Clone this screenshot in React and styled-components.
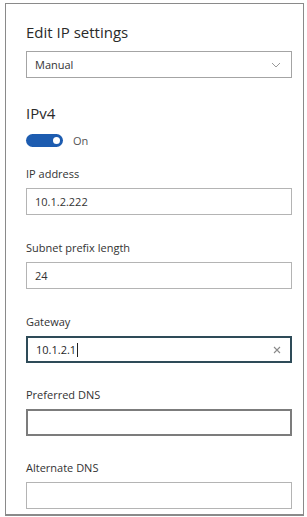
import React from "react";
import styled, { createGlobalStyle } from "styled-components";

const GlobalStyle = createGlobalStyle`
  body {
    margin: 0;
    background: #ffffff;
    font-family: "Open Sans", "Noto Sans", "Liberation Sans", sans-serif;
  }
`;

const Page = styled.div`
  width: 307px;
  height: 517px;
  padding: 3px 3px 0 5px;
  box-sizing: border-box;
  background: #ffffff;
`;

const Panel = styled.div`
  width: 299px;
  height: 513px;
  box-sizing: border-box;
  border: 1px solid #8a8a8a;
  border-bottom-width: 2px;
  padding: 18px 11px 0 20px;
  overflow: hidden;
`;

const Title = styled.div`
  font-size: 15px;
  line-height: 20px;
  color: #2a2a2a;
`;

const Select = styled.div`
  margin-top: 9px;
  height: 27px;
  box-sizing: border-box;
  border: 1.5px solid #a4a4a4;
  display: flex;
  align-items: center;
  justify-content: space-between;
  padding: 0 10px 0 8px;
  font-size: 11px;
  color: #333;
`;

const Heading = styled.div`
  margin-top: 25px;
  font-size: 15px;
  line-height: 20px;
  color: #2a2a2a;
`;

const ToggleRow = styled.div`
  margin-top: 9px;
  height: 16px;
  display: flex;
  align-items: center;
  gap: 10px;
  font-size: 11px;
  color: #555;
`;

const Switch = styled.div`
  width: 37px;
  height: 13px;
  border-radius: 7px;
  background: #1d5cb0;
  display: flex;
  align-items: center;
  justify-content: flex-end;
  padding-right: 3px;
  box-sizing: border-box;
`;

const Knob = styled.div`
  width: 7px;
  height: 7px;
  border-radius: 50%;
  background: #ffffff;
`;

const Field = styled.div`
  margin-top: ${({ $gap }) => $gap}px;
`;

const Label = styled.div`
  font-size: 11px;
  line-height: 16px;
  color: #333;
  margin-bottom: 6px;
`;

const Input = styled.div`
  height: 27px;
  box-sizing: border-box;
  border: ${({ $variant }) =>
    $variant === "focus"
      ? "2px solid #2e4b58"
      : $variant === "dark"
      ? "2px solid #7c7c7c"
      : "1.5px solid #b4b4b4"};
  display: flex;
  align-items: center;
  justify-content: space-between;
  padding: 0 9px 0 8px;
  font-size: 11px;
  color: ${({ $variant }) => ($variant === "focus" ? "#1f1f1f" : "#333")};
`;

const Value = styled.span`
  display: flex;
  align-items: center;
`;

const Caret = styled.span`
  display: inline-block;
  width: 1px;
  height: 14px;
  background: #222;
  margin-left: 1px;
`;

const Chevron = () => (
  <svg width="10" height="6" viewBox="0 0 10 6">
    <path d="M1 1l4 4 4-4" fill="none" stroke="#9a9a9a" strokeWidth="1" />
  </svg>
);

const Clear = () => (
  <svg width="8" height="8" viewBox="0 0 8 8">
    <path d="M1 1l6 6M7 1l-6 6" stroke="#8a8a8a" strokeWidth="1.1" />
  </svg>
);

const fields = [
  { label: "IP address", value: "10.1.2.222", gap: 18 },
  { label: "Subnet prefix length", value: "24", gap: 25 },
  { label: "Gateway", value: "10.1.2.1", variant: "focus", gap: 25 },
  { label: "Preferred DNS", value: "", variant: "dark", gap: 24 },
  { label: "Alternate DNS", value: "", gap: 24 },
];

export default function App() {
  return (
    <>
      <GlobalStyle />
      <Page>
        <Panel>
          <Title>Edit IP settings</Title>
          <Select>
            <span>Manual</span>
            <Chevron />
          </Select>
          <Heading>IPv4</Heading>
          <ToggleRow>
            <Switch>
              <Knob />
            </Switch>
            <span>On</span>
          </ToggleRow>
          {fields.map((f) => (
            <Field key={f.label} $gap={f.gap}>
              <Label>{f.label}</Label>
              <Input $variant={f.variant}>
                <Value>
                  {f.value}
                  {f.variant === "focus" && <Caret />}
                </Value>
                {f.variant === "focus" && <Clear />}
              </Input>
            </Field>
          ))}
        </Panel>
      </Page>
    </>
  );
}
